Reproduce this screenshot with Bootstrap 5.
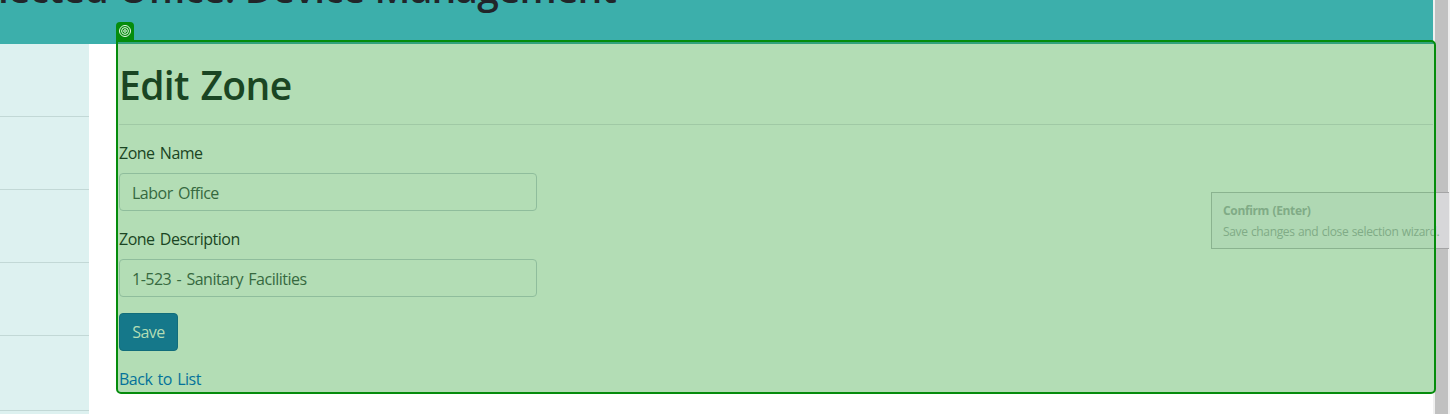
<!DOCTYPE html>
<html lang="en">
<head>
<meta charset="utf-8">
<meta name="viewport" content="width=device-width, initial-scale=1">
<title>Edit Zone</title>
<link rel="stylesheet" href="https://cdn.jsdelivr.net/npm/bootstrap@5.3.0/dist/css/bootstrap.min.css">
<style>
body{font-family:"Open Sans","Noto Sans",sans-serif;height:414px;color:#1a4523}
.page{width:1433px}
.band{height:44px;background:#3cafab}
.band-title{width:616px;margin-top:-36px;font-size:39px;line-height:48px;font-weight:600;color:#212529;letter-spacing:-.85px;word-spacing:1px}
.side{width:89px;background:#ddf1f0}
.side div{height:73px;border-bottom:1px solid #c2d8d6}
.side div:nth-child(5){height:75px}
.zone{margin:-4px -3px 0 27px;height:354px;border:2px solid #058c0c;border-radius:0 5px 5px 5px;background:linear-gradient(#31a27c 2px,#b3ddb5 2px);padding:0 1px}
.marker{left:-2px;top:-20px;width:18px;height:20px;background:#058c0c;border-radius:4px 4px 0 0}
.marker svg{margin-top:-1px}
.zone h1{font-size:39px;font-weight:600;line-height:48px;margin:19px 0 0;letter-spacing:-.6px;word-spacing:2px}
.rule{height:1px;background:#a0c9a5;margin:15px 0 16px}
.zone label,.zone .form-control,.btn-save,.back{letter-spacing:-.5px;word-spacing:1.6px}
.zone label{line-height:24px;margin-bottom:8px}
.zone .form-control{width:418px;height:38px;background:transparent;border-color:#8fbd9c;border-radius:4px;color:#36693f;padding:7px 12px 5px}
.btn-save{width:59px;height:38px;background:#15788a;border:1px solid #116d7b;color:#b3ddb5;border-radius:4px;padding:6px 0}
.back{color:#04729a;line-height:24px}
.track{width:17px;background:#f0f0f0}
.thumb{width:13px;background:#c1c1c1;margin-left:2px}
.tip{left:1211px;top:192px;width:238px;height:57px;border:1px solid #8ab38f;border-right:0;background:linear-gradient(90deg,#afd8b3 223px,#d7d7d9 223px);color:#80ab86;font-size:12px;line-height:21px;padding:7px 0 0 11px;letter-spacing:-.35px;word-spacing:.6px}
.edge{left:1434px;top:180px;width:2px;height:80px;background:#058c0c}
.tipline{left:1436px;width:13px;height:1px;background:#a4a4a5}
</style>
</head>
<body class="overflow-hidden d-flex position-relative">
<div class="page d-flex flex-column flex-shrink-0">
  <header class="band overflow-hidden flex-shrink-0"><div class="band-title d-flex justify-content-end text-nowrap">Selected Office: Device Management</div></header>
  <div class="d-flex flex-grow-1">
    <nav class="side flex-shrink-0"><div></div><div></div><div></div><div></div><div></div></nav>
    <main class="zone flex-grow-1 position-relative">
      <span class="marker position-absolute d-flex justify-content-center pt-1"><svg width="12" height="12" viewBox="0 0 12 12" fill="none" stroke="#e8f7e8"><circle cx="6" cy="6" r="5.5"/><circle cx="6" cy="6" r="3.4"/><circle cx="6" cy="6" r="1.3"/></svg></span>
      <h1>Edit Zone</h1>
      <div class="rule"></div>
      <form>
        <div class="mb-3"><label class="d-block" for="n">Zone Name</label><input id="n" class="form-control" value="Labor Office"></div>
        <div class="mb-3"><label class="d-block" for="d">Zone Description</label><input id="d" class="form-control" value="1-523 - Sanitary Facilities"></div>
        <button type="button" class="btn btn-save d-block mb-3">Save</button>
      </form>
      <a class="back text-decoration-none" href="#">Back to List</a>
    </main>
  </div>
</div>
<div class="track flex-shrink-0 d-flex"><div class="thumb"></div></div>
<div class="tip position-absolute text-nowrap"><div class="fw-bold">Confirm (Enter)</div><div>Save changes and close selection wizard.</div></div>
<div class="edge position-absolute"></div>
<div class="tipline position-absolute" style="top:192px"></div><div class="tipline position-absolute" style="top:248px"></div>
<script src="https://cdn.jsdelivr.net/npm/bootstrap@5.3.0/dist/js/bootstrap.bundle.min.js"></script>
</body>
</html>
